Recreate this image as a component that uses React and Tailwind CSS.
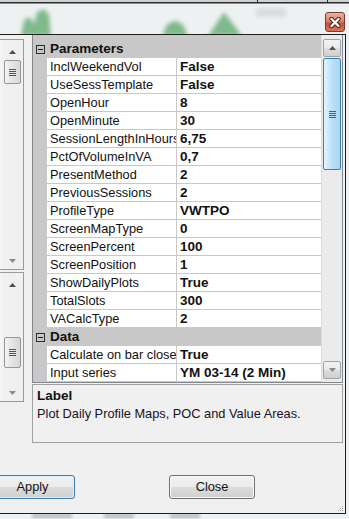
import React from "react";

const rows = [
  { cat: "Parameters" },
  { name: "InclWeekendVol", value: "False" },
  { name: "UseSessTemplate", value: "False" },
  { name: "OpenHour", value: "8" },
  { name: "OpenMinute", value: "30" },
  { name: "SessionLengthInHours", value: "6,75" },
  { name: "PctOfVolumeInVA", value: "0,7" },
  { name: "PresentMethod", value: "2" },
  { name: "PreviousSessions", value: "2" },
  { name: "ProfileType", value: "VWTPO" },
  { name: "ScreenMapType", value: "0" },
  { name: "ScreenPercent", value: "100" },
  { name: "ScreenPosition", value: "1" },
  { name: "ShowDailyPlots", value: "True" },
  { name: "TotalSlots", value: "300" },
  { name: "VACalcType", value: "2" },
  { cat: "Data" },
  { name: "Calculate on bar close", value: "True" },
  { name: "Input series", value: "YM 03-14 (2 Min)" },
];

const btnBg =
  "bg-[linear-gradient(to_bottom,#f2f2f2_0%,#ebebeb_50%,#dddddd_51%,#cfcfcf_100%)]";

const Arrow = ({ down, color = "#4d4d4d" }) => (
  <svg width="7" height="4" viewBox="0 0 7 4">
    <path d={down ? "M0 0 L7 0 L3.5 4 Z" : "M0 4 L7 4 L3.5 0 Z"} fill={color} />
  </svg>
);

const Grip = ({ color = "#4b4b4b" }) => (
  <div className="flex flex-col gap-[1px]">
    <div className="h-[1px] w-[7px]" style={{ background: color }} />
    <div className="h-[1px] w-[7px]" style={{ background: color }} />
    <div className="h-[1px] w-[7px]" style={{ background: color }} />
    <div className="h-[1px] w-[7px]" style={{ background: color }} />
  </div>
);

const GlassBackdrop = () => (
  <svg className="absolute inset-0" width="349" height="34" viewBox="0 0 349 34">
    <defs>
      <filter id="soft" x="-30%" y="-30%" width="160%" height="160%">
        <feGaussianBlur stdDeviation="2.2" />
      </filter>
    </defs>
    <rect x="0" y="0" width="349" height="3" fill="#cfd2d3" />
    <rect x="0" y="2" width="349" height="1.5" fill="#2b2b2b" />
    <rect x="257" y="0" width="1" height="3" fill="#2b2b2b" />
    <rect x="327" y="0" width="1" height="3" fill="#2b2b2b" />
    <g filter="url(#soft)" fill="#80b98c">
      <path d="M21 36 L24 20 L30 17 L34 24 L37 12 L44 9 L49 14 L51 36 Z" />
      <path d="M163 36 Q165 22 175 21 Q185 22 187 36 Z" />
      <path d="M208 36 L224 12 L242 36 Z" />
    </g>
    <rect x="256" y="8" width="30" height="9" fill="#d8dcdd" filter="url(#soft)" />
  </svg>
);

const BottomGlass = () => (
  <svg width="349" height="5" viewBox="0 0 349 5">
    <defs>
      <filter id="soft2" x="-30%" y="-100%" width="160%" height="300%">
        <feGaussianBlur stdDeviation="1.5" />
      </filter>
    </defs>
    <g filter="url(#soft2)" fill="#b9bcbd">
      <rect x="32" y="0" width="40" height="4" />
      <rect x="104" y="0" width="30" height="4" />
      <rect x="170" y="0" width="30" height="4" />
    </g>
  </svg>
);

const ListBox = ({ height, thumbTop, thumbHeight }) => (
  <div
    className="flex justify-end border-y border-r border-[#9a9a9a] bg-[#f4f4f4]"
    style={{ height }}
  >
    <div className="flex w-[21px] flex-col items-center bg-[#f0f0f0] px-[2px]">
      <div className="flex h-[17px] shrink-0 items-end pb-[3px]">
        <Arrow />
      </div>
      <div style={{ height: thumbTop }} className="shrink-0" />
      <div
        className="flex w-full shrink-0 items-center justify-center rounded-[2px] border border-[#979797] bg-[linear-gradient(to_right,#f3f3f3,#e3e3e3_50%,#d6d6d6)]"
        style={{ height: thumbHeight }}
      >
        <Grip color="#555" />
      </div>
      <div className="flex-1" />
      <div className="flex h-[17px] shrink-0 items-center">
        <Arrow down color="#8a8a8a" />
      </div>
    </div>
  </div>
);

const CategoryIcon = () => (
  <div className="relative flex h-[9px] w-[9px] items-center justify-center border border-[#2e2e2e] bg-[#c8c8c8]">
    <div className="h-[1px] w-[5px] bg-[#1a1a1a]" />
  </div>
);

const GridRow = ({ row }) => {
  if (row.cat) {
    return (
      <div className="flex h-[18px] items-center bg-[#c8c8c8]">
        <div className="flex w-[14px] justify-end pr-[2px]">
          <CategoryIcon />
        </div>
        <span className="pl-[3px] text-[13.5px] font-bold leading-[18px] text-[#101010]">
          {row.cat}
        </span>
      </div>
    );
  }
  return (
    <div className="flex h-[18px]">
      <div className="w-[14px] shrink-0 bg-[#c8c8c8]" />
      <div className="w-[130px] shrink-0 overflow-hidden whitespace-nowrap border-r border-b border-[#c8c8c8] bg-white pl-[3px] text-[12.8px] leading-[17px] text-[#111]">
        {row.name}
      </div>
      <div className="flex-1 overflow-hidden whitespace-nowrap border-b border-[#c8c8c8] bg-white pl-[3px] text-[13.5px] font-bold leading-[17px] text-[#111]">
        {row.value}
      </div>
    </div>
  );
};

const GridScrollbar = () => (
  <div className="flex w-[21px] flex-col border-l border-[#dcdcdc] bg-[#ebebeb] px-[1px] pt-[4px] pb-[3px]">
    <div className={`flex h-[18px] shrink-0 items-center justify-center rounded-[2px] border border-[#a3a3a3] ${btnBg}`}>
      <Arrow />
    </div>
    <div className="mt-[1px] flex h-[112px] shrink-0 items-center justify-center rounded-[2px] border border-[#3c7fb1] bg-[linear-gradient(to_right,#e3f4fe,#bfe2f9_45%,#a7d5f4)]">
      <Grip color="#2d6a99" />
    </div>
    <div className="flex-1" />
    <div className={`flex h-[18px] shrink-0 items-center justify-center rounded-[2px] border border-[#a3a3a3] ${btnBg}`}>
      <Arrow down color="#8a8a8a" />
    </div>
  </div>
);

export default function App() {
  return (
    <div className="relative h-[519px] w-[349px] overflow-hidden bg-[#eef1f2] font-['Liberation_Sans',Arial,sans-serif] text-black">
      {/* glass frame with the chart showing through */}
      <div className="relative h-[34px]">
        <GlassBackdrop />
        <div className="relative flex h-full justify-end pt-[12px] pr-[4px]">
          <div className="flex h-[20px] w-[20px] items-center justify-center rounded-[3px] border border-[#7d3a2f] bg-[linear-gradient(to_bottom,#eab3a6,#d77a66_50%,#c5523a_55%,#d8735c)]">
            <svg width="12" height="11" viewBox="0 0 12 11">
              <path d="M2.5 2 L9.5 9 M9.5 2 L2.5 9" stroke="#4a2018" strokeWidth="4.2" strokeLinecap="round" />
              <path d="M2.5 2 L9.5 9 M9.5 2 L2.5 9" stroke="#ffffff" strokeWidth="2.4" strokeLinecap="round" />
            </svg>
          </div>
        </div>
      </div>

      {/* window body */}
      <div className="relative flex h-[480px] w-[346px] flex-col border-y border-r border-[#1e1e1e] bg-[#f0f0f0]">
        <div className="flex items-start">
          <div className="flex w-[24px] flex-col gap-[2px] pt-[4px]">
            <ListBox height={231} thumbTop={3} thumbHeight={24} />
            <ListBox height={130} thumbTop={47} thumbHeight={31} />
          </div>

          <div className="ml-[8px] flex w-[311px] flex-col">
            <div className="flex h-[348px] border-x border-b border-[#828790] bg-[#c8c8c8]">
              <div className="flex w-[288px] flex-col pt-[5px]">
                {rows.map((row, i) => (
                  <GridRow key={i} row={row} />
                ))}
              </div>
              <GridScrollbar />
            </div>

            <div className="mt-[1px] h-[59px] border border-[#a0a0a0] bg-[#f0f0f0] px-[4px] pt-[2px]">
              <div className="text-[13.5px] font-bold leading-[18px] text-[#111]">Label</div>
              <div className="text-[12.8px] leading-[17px] text-[#1a1020]">
                Plot Daily Profile Maps, POC and Value Areas.
              </div>
            </div>
          </div>
        </div>

        <div className="mt-[32px] flex">
          <button className={`-ml-[10px] h-[24px] w-[85px] rounded-[3px] border border-[#3c7fb1] ${btnBg} text-[12.8px] text-[#111] shadow-[inset_0_0_0_1px_#d8eefb]`}>
            Apply
          </button>
          <button className={`ml-[94px] h-[24px] w-[86px] rounded-[3px] border border-[#707070] ${btnBg} text-[12.8px] text-[#111] shadow-[inset_0_0_0_1px_#fafafa]`}>
            Close
          </button>
        </div>

        {/* size grip */}
        <div className="absolute right-[2px] bottom-[2px] grid grid-cols-3 gap-[1px]">
          <span className="h-[1px] w-[1px]" />
          <span className="h-[1px] w-[1px]" />
          <span className="h-[1px] w-[1px] bg-[#9a9a9a]" />
          <span className="h-[1px] w-[1px]" />
          <span className="h-[1px] w-[1px] bg-[#9a9a9a]" />
          <span className="h-[1px] w-[1px] bg-[#9a9a9a]" />
          <span className="h-[1px] w-[1px] bg-[#9a9a9a]" />
          <span className="h-[1px] w-[1px] bg-[#9a9a9a]" />
          <span className="h-[1px] w-[1px] bg-[#9a9a9a]" />
        </div>
      </div>

      <BottomGlass />
    </div>
  );
}
